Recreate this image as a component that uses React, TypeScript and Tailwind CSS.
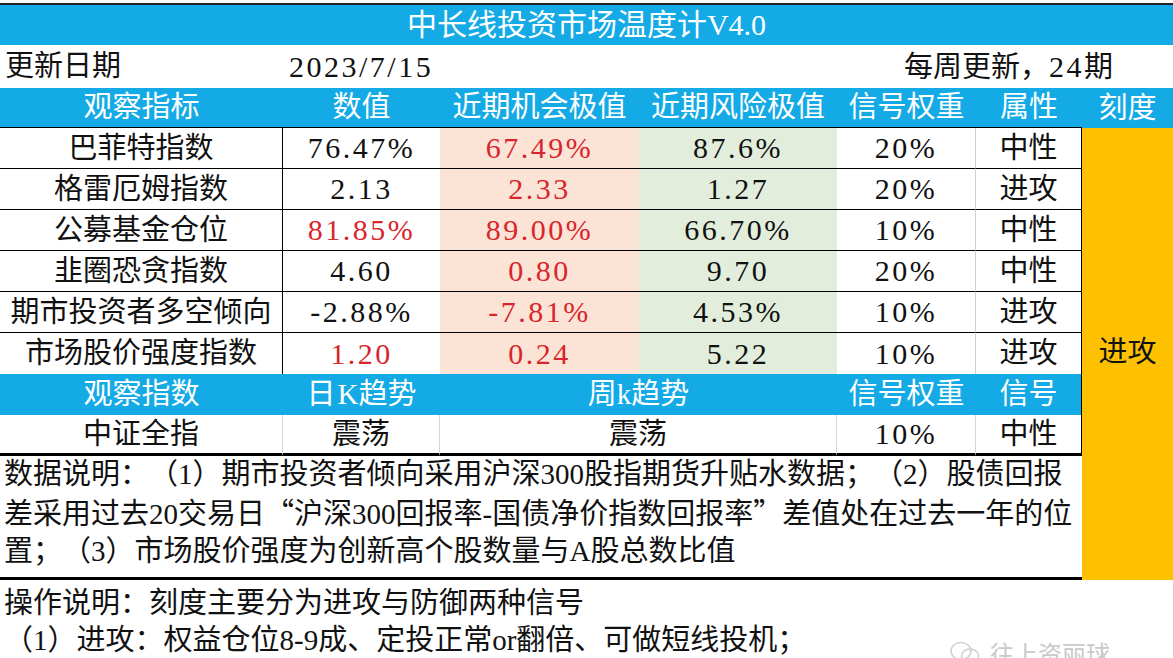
import React from "react";

const BLUE = "bg-[#14aae6]";

type Row = {
  name: string;
  val: string;
  valRed: boolean;
  opp: string;
  risk: string;
  w: string;
  attr: string;
};

const rows: Row[] = [
  { name: "巴菲特指数", val: "76.47%", valRed: false, opp: "67.49%", risk: "87.6%", w: "20%", attr: "中性" },
  { name: "格雷厄姆指数", val: "2.13", valRed: false, opp: "2.33", risk: "1.27", w: "20%", attr: "进攻" },
  { name: "公募基金仓位", val: "81.85%", valRed: true, opp: "89.00%", risk: "66.70%", w: "10%", attr: "中性" },
  { name: "韭圈恐贪指数", val: "4.60", valRed: false, opp: "0.80", risk: "9.70", w: "20%", attr: "中性" },
  { name: "期市投资者多空倾向", val: "-2.88%", valRed: false, opp: "-7.81%", risk: "4.53%", w: "10%", attr: "进攻" },
  { name: "市场股价强度指数", val: "1.20", valRed: true, opp: "0.24", risk: "5.22", w: "10%", attr: "进攻" },
];

function Cell({ children, className = "" }: { children?: React.ReactNode; className?: string }) {
  return (
    <div className={"flex items-center justify-center whitespace-nowrap overflow-hidden " + className}>
      {children}
    </div>
  );
}

const Num = ({ children }: { children: React.ReactNode }) => (
  <span className="text-[30px] tracking-[2.5px]">{children}</span>
);

export default function App() {
  return (
    <div className="w-[1173px] h-[658px] overflow-hidden bg-white relative font-['Liberation_Serif','Noto_Sans_CJK_SC',serif] text-[#111] text-[29px] leading-none [text-spacing-trim:space-all]">
      <div className="h-[3px] bg-white" />
      <div className="h-[2px] bg-[#222]" />
      <div className={"h-[40px] flex items-center justify-center text-white text-[30px] " + BLUE}>
        中长线投资市场温度计V4.0
      </div>
      <div className="h-[43px] flex items-center">
        <div className="w-[283px] pl-[5px]">更新日期</div>
        <div className="pl-[6px]">
          <Num>2023/7/15</Num>
        </div>
        <div className="ml-auto pr-[60px]">
          每周更新，<Num>24</Num>期
        </div>
      </div>

      <div className="grid grid-cols-[283px_157px_199px_198px_139px_106px_91px] grid-rows-[40px_repeat(6,41px)_41px_41px_124px]">
        {/* header */}
        <Cell className={"text-white border-b border-black " + BLUE}>观察指标</Cell>
        <Cell className={"text-white border-b border-black " + BLUE}>数值</Cell>
        <Cell className={"text-white border-b border-black " + BLUE}>近期机会极值</Cell>
        <Cell className={"text-white border-b border-black " + BLUE}>近期风险极值</Cell>
        <Cell className={"text-white border-b border-black " + BLUE}>信号权重</Cell>
        <Cell className={"text-white border-b border-black " + BLUE}>属性</Cell>
        <Cell className={"text-white " + BLUE}>刻度</Cell>

        {rows.map((r, i) => (
          <React.Fragment key={r.name}>
            <Cell className={"col-start-1 border-r border-black " + (i < 5 ? "border-b" : "")}>{r.name}</Cell>
            <Cell className={(i < 5 ? "border-b border-black " : "") + (r.valRed ? "text-[#d8262c]" : "")}>
              <Num>{r.val}</Num>
            </Cell>
            <Cell className={"bg-[#fbe3d6] text-[#d8262c] " + (i < 5 ? "border-b border-black" : "")}>
              <Num>{r.opp}</Num>
            </Cell>
            <Cell className={"bg-[#e2eedb] " + (i < 5 ? "border-b border-black" : "")}>
              <Num>{r.risk}</Num>
            </Cell>
            <Cell className={"border-r border-r-[#cfcfcf] " + (i < 5 ? "border-b border-b-black" : "")}>
              <Num>{r.w}</Num>
            </Cell>
            <Cell className={"border-r border-r-black " + (i < 5 ? "border-b border-b-black" : "")}>{r.attr}</Cell>
          </React.Fragment>
        ))}

        {/* orange scale column */}
        <Cell className="col-start-7 row-start-2 row-span-9 bg-[#fdc100] pb-[4px]">进攻</Cell>

        {/* second header */}
        <Cell className={"col-start-1 row-start-8 text-white " + BLUE}>观察指数</Cell>
        <Cell className={"text-white " + BLUE}>
          日<span className="ml-[2px]">K</span>趋势
        </Cell>
        <Cell className={"col-span-2 text-white " + BLUE}>周k趋势</Cell>
        <Cell className={"text-white " + BLUE}>信号权重</Cell>
        <Cell className={"text-white border-r border-black " + BLUE}>信号</Cell>

        {/* 中证全指 */}
        <Cell className="col-start-1 row-start-9 border-r border-r-[#d6d6d6] border-b-[3px] border-b-black">中证全指</Cell>
        <Cell className="border-r border-r-[#d6d6d6] border-b-[3px] border-b-black">震荡</Cell>
        <Cell className="col-span-2 border-r border-r-[#d6d6d6] border-b-[3px] border-b-black">震荡</Cell>
        <Cell className="border-r border-r-[#d6d6d6] border-b-[3px] border-b-black">
          <Num>10%</Num>
        </Cell>
        <Cell className="border-r border-r-black border-b-[3px] border-b-black">中性</Cell>

        {/* description */}
        <div className="col-start-1 col-span-6 row-start-10 border-b-[3px] border-black pl-[4px] pt-0 text-[29px] leading-[37px] whitespace-nowrap overflow-hidden">
          <div>数据说明：（1）期市投资者倾向采用沪深300股指期货升贴水数据；（2）股债回报</div>
          <div>
            差采用过去20交易日<span className="font-['Noto_Sans_CJK_SC',sans-serif]">“</span>沪深300回报率-国债净价指数回报率
            <span className="font-['Noto_Sans_CJK_SC',sans-serif]">”</span>差值处在过去一年的位
          </div>
          <div>置；（3）市场股价强度为创新高个股数量与A股总数比值</div>
        </div>
      </div>

      <div className="pl-[4px] pt-[5px] text-[29px] leading-[37px] whitespace-nowrap">
        <div>操作说明：刻度主要分为进攻与防御两种信号</div>
        <div>（1）进攻：权益仓位8-9成、定投正常or翻倍、可做短线投机；</div>
      </div>

      {/* watermark */}
      <div className="absolute left-[950px] top-[640px] flex items-center gap-[10px] text-[#c9c9c9] text-[24px] font-['Noto_Sans_CJK_SC',sans-serif]">
        <svg width="30" height="26" viewBox="0 0 30 26" fill="none" stroke="#cfcfcf" strokeWidth="1.5">
          <ellipse cx="11" cy="11" rx="10" ry="8.5" />
          <ellipse cx="20" cy="16" rx="8.5" ry="7" />
        </svg>
        <span>往上资丽球</span>
      </div>
    </div>
  );
}
